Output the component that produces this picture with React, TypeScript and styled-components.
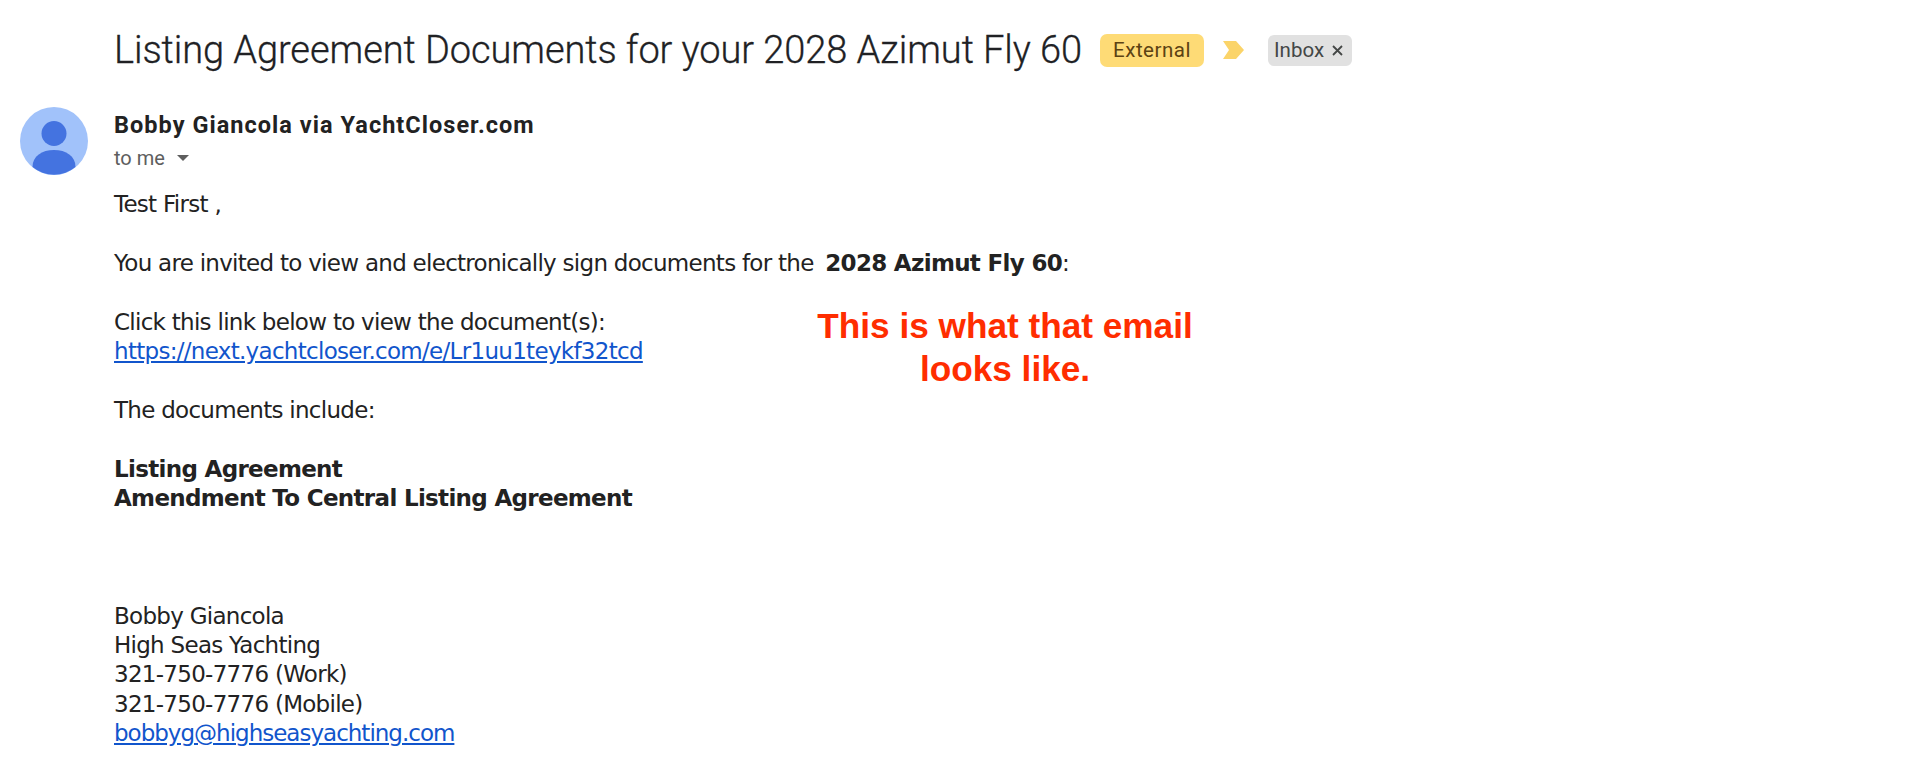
import React from 'react';
import styled, { createGlobalStyle } from 'styled-components';

const GlobalStyle = createGlobalStyle`
  html, body {
    margin: 0;
    padding: 0;
    background: #ffffff;
  }
`;

const Page = styled.div`
  position: relative;
  width: 1920px;
  height: 778px;
  overflow: hidden;
  background: #ffffff;
  color: #222222;
  font-family: "DejaVu Sans", Verdana, sans-serif;
`;

const SubjectRow = styled.div`
  display: flex;
  align-items: center;
  height: 50px;
  padding: 25px 0 0 114px;
`;

const Subject = styled.h1`
  margin: 0;
  font-family: Roboto, sans-serif;
  font-size: 38px;
  font-weight: 300;
  line-height: 50px;
  letter-spacing: -0.07px;
  color: #202124;
  -webkit-text-stroke: 0.3px #202124;
`;

const ExternalChip = styled.span`
  display: flex;
  align-items: center;
  justify-content: center;
  box-sizing: border-box;
  width: 104px;
  height: 33px;
  margin-left: 18px;
  border-radius: 7px;
  background: #fedb76;
  color: #5c4213;
  font-family: Roboto, sans-serif;
  font-size: 20.5px;
  letter-spacing: 0.5px;
`;

const Marker = styled.svg`
  width: 21px;
  height: 18px;
  margin-left: 19px;
  flex: none;
`;

const InboxChip = styled.span`
  display: flex;
  align-items: center;
  gap: 8px;
  box-sizing: border-box;
  width: 84px;
  height: 31px;
  margin-left: 24px;
  padding-left: 6px;
  border-radius: 6px;
  background: #e1e1e1;
  color: #444746;
  font-family: Roboto, sans-serif;
  font-size: 20.5px;
`;

const CloseGlyph = styled.svg`
  width: 11px;
  height: 11px;
`;

const MessageRow = styled.div`
  display: flex;
  padding: 32px 0 0 20px;
`;

const Avatar = styled.svg`
  width: 68px;
  height: 68px;
  flex: none;
`;

const MessageBody = styled.div`
  margin-left: 26px;
`;

const Sender = styled.div`
  margin-top: 5px;
  font-family: Roboto, sans-serif;
  font-size: 23.5px;
  font-weight: 700;
  line-height: 26px;
  letter-spacing: 1.03px;
  color: #222222;
`;

const Recipient = styled.div`
  display: flex;
  align-items: center;
  gap: 12px;
  margin-top: 7px;
  font-family: Roboto, sans-serif;
  font-size: 20px;
  line-height: 26px;
  color: #5e5e5e;
`;

const Caret = styled.span`
  width: 0;
  height: 0;
  border-left: 6px solid transparent;
  border-right: 6px solid transparent;
  border-top: 6px solid #5e5e5e;
`;

const Letter = styled.div`
  margin-top: 19px;
  font-size: 23px;
  line-height: 29.4px;
  letter-spacing: -0.72px;
`;

const Line = styled.div<{ $gap?: number }>`
  margin-top: ${props => (props.$gap ?? 0) * 29.4}px;
  min-height: 29.4px;
`;

const Strong = styled.b<{ $offset?: number }>`
  margin-left: ${props => props.$offset ?? 0}px;
  font-weight: 700;
  letter-spacing: -0.68px;
`;

const MailLink = styled.a<{ $tight?: boolean }>`
  color: #1155cc;
  text-decoration: underline;
  letter-spacing: ${props => (props.$tight ? '-1px' : '-0.7px')};
`;

const Annotation = styled.div`
  position: absolute;
  left: 770px;
  top: 304px;
  width: 470px;
  text-align: center;
  font-family: "Liberation Sans", Arial, sans-serif;
  font-size: 35.2px;
  font-weight: 700;
  line-height: 43px;
  color: #ff2d00;
`;

export default function App() {
  return (
    <Page>
      <GlobalStyle />
      <SubjectRow>
        <Subject>Listing Agreement Documents for your 2028 Azimut Fly 60</Subject>
        <ExternalChip>External</ExternalChip>
        <Marker viewBox="0 0 21 18">
          <path d="M0 0H13L21 9L13 18H0L6 9Z" fill="#fbd469" />
        </Marker>
        <InboxChip>
          Inbox
          <CloseGlyph viewBox="0 0 11 11">
            <path d="M1 1L10 10M10 1L1 10" stroke="#444746" strokeWidth="1.8" />
          </CloseGlyph>
        </InboxChip>
      </SubjectRow>
      <MessageRow>
        <Avatar viewBox="0 0 68 68">
          <circle cx="34" cy="34" r="34" fill="#a1c2fa" />
          <circle cx="34" cy="26.5" r="12.5" fill="#4473e0" />
          <path d="M12.5 60C12.5 49 22 43 34 43S55.5 49 55.5 60A34 34 0 0 1 12.5 60Z" fill="#4473e0" />
        </Avatar>
        <MessageBody>
          <Sender>Bobby Giancola via YachtCloser.com</Sender>
          <Recipient>
            to me
            <Caret />
          </Recipient>
          <Letter>
            <Line>Test First ,</Line>
            <Line $gap={1}>
              You are invited to view and electronically sign documents for the <Strong $offset={5}>2028 Azimut Fly 60</Strong>:
            </Line>
            <Line $gap={1}>Click this link below to view the document(s):</Line>
            <Line>
              <MailLink href="#">https://next.yachtcloser.com/e/Lr1uu1teykf32tcd</MailLink>
            </Line>
            <Line $gap={1}>The documents include:</Line>
            <Line $gap={1}><Strong>Listing Agreement</Strong></Line>
            <Line><Strong>Amendment To Central Listing Agreement</Strong></Line>
            <Line $gap={3}>Bobby Giancola</Line>
            <Line>High Seas Yachting</Line>
            <Line>321-750-7776 (Work)</Line>
            <Line>321-750-7776 (Mobile)</Line>
            <Line>
              <MailLink href="#" $tight>bobbyg@highseasyachting.com</MailLink>
            </Line>
          </Letter>
        </MessageBody>
      </MessageRow>
      <Annotation>
        This is what that email
        <br />
        looks like.
      </Annotation>
    </Page>
  );
}
